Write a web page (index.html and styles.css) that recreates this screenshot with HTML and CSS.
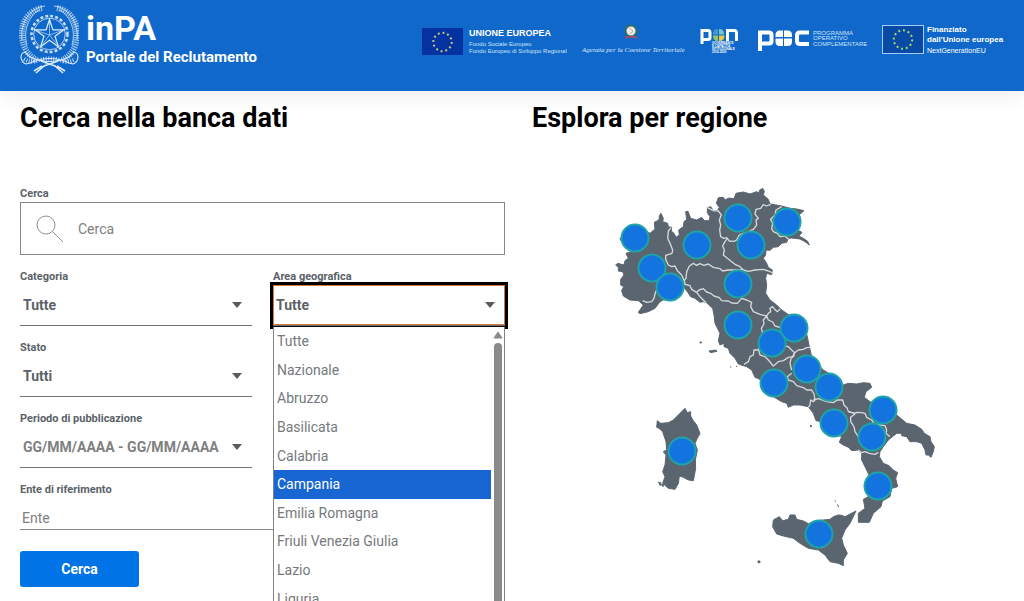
FILE: index.html
```html
<!DOCTYPE html>
<html lang="it">
<head>
<meta charset="utf-8">
<meta name="viewport" content="width=device-width, initial-scale=1">
<title>inPA - Portale del Reclutamento</title>
<link rel="stylesheet" href="styles.css">
</head>
<body>
<header class="header">
  <a class="brand" href="#">
    <svg class="emblem" width="60" height="70" viewBox="19 2 60 70" fill="none" stroke="#dcebfb" aria-hidden="true">
      <circle cx="49.500" cy="32" r="18" stroke-width="2.500" stroke-dasharray="3 2" opacity=".9"/>
      <circle cx="49.500" cy="32" r="15.800" stroke-width=".8"/>
      <path d="M49.500 17.500l3.400 10.300h11l-8.900 6.500 3.500 10.600-9-6.600-9 6.600 3.500-10.600-8.900-6.500h11z" stroke-width="1.200"/>
      <path d="M49.500 19v14M36.500 28.500l13 4.500M62 28.500L49.500 33M42 43l7.500-10M57.500 43l-8-10" stroke-width=".6"/>
      <path d="M42 6C25 9 18 27 24 44q4 10 13 14" stroke-width="6" stroke-dasharray="1.200 1.100" opacity=".7"/>
      <path d="M57 6c17 3 24 21 18 38q-4 10-13 14" stroke-width="6" stroke-dasharray="1.200 1.100" opacity=".7"/>
      <path d="M45 4C29 6 20 22 22 38M39 8C28 15 23 29 27 43M54 4c16 2 25 18 23 34M60 8c11 7 16 21 12 35" stroke-width=".8"/>
      <path d="M25 50q-4 1-4 5 0 5 5 7l4-1q20-9 39 0l4 1q5-2 5-7 0-4-4-5l-5 5q-19 9-39 0z" stroke-width="1.100"/>
      <path d="M24 57q7 4 12 2 14-5 27 0 6 2 12-2" stroke-width="4" stroke-dasharray="1 1.500" opacity=".85"/>
      <path d="M36 71l8-7 14-5M34 69l8-5M63 71l-8-7-14-5M65 69l-8-5" stroke-width="1.600"/>
    </svg>
    <span class="brand-text">
      <span class="brand-name">inPA</span>
      <span class="brand-tagline">Portale del Reclutamento</span>
    </span>
  </a>
  <div class="partners">
    <svg class="partner" width="145" height="42" viewBox="422 20 145 42">
      <rect x="422" y="28" width="41" height="27" fill="#0432a0"/>
      <circle class="stars" cx="442.500" cy="42" r="9.200" pathLength="120"/>
      <text class="p-title" x="469" y="36">UNIONE EUROPEA</text>
      <text class="p-small" x="469" y="46">Fondo Sociale Europeo</text>
      <text class="p-small" x="469" y="53">Fondo Europeo di Sviluppo Regionale</text>
    </svg>
    <svg class="partner" width="103" height="42" viewBox="582 20 103 42">
      <circle cx="631" cy="31" r="5.500" fill="#e9eee9" stroke="#326f60" stroke-width="2"/>
      <path d="M629 28l4 3-3 3" fill="none" stroke="#c7a7a0"/>
      <path d="M625 38q6-3 12 0" fill="none" stroke="#ad4d64" stroke-width="2"/>
      <text class="p-script" x="582" y="52">Agenzia per la Coesione Territoriale</text>
    </svg>
    <svg class="partner" width="43" height="42" viewBox="700 20 43 42">
      <g fill="none" stroke="#fff" stroke-width="3">
        <path d="M702 44V30.500h6q2 0 2 2v5q0 2-2 2h-6"/>
        <path d="M727.500 41V30.500h6.500q2.500 0 2.500 2.500v8"/>
      </g>
      <path d="M713 34q0-5 5-5v5.500h-5z" fill="#4099cf"/><path d="M719 29q5 0 5 5v.500h-5z" fill="#78c7c8"/>
      <path d="M713 35.500h5V41q-5 0-5-5.500z" fill="#93c66c"/><path d="M719 35.500h5.500q0 5.500-5.500 5.500z" fill="#eec83e"/>
      <g class="p-micro"><text x="712" y="44">GOVERNANCE</text><text x="712" y="47">E CAPACITÀ</text><text x="712" y="50">ISTITUZIONALE</text><text x="712" y="53">2014-2020</text></g>
    </svg>
    <svg class="partner" width="109" height="42" viewBox="758 20 109 42">
      <g fill="none" stroke="#fff" stroke-width="4">
        <path d="M760 51V32.500h9q2.500 0 2.500 2.500v6q0 2.500-2.500 2.500h-9"/>
        <path d="M809 32.500h-9q-3 0-3 3v5.500q0 3 3 3h9"/>
      </g>
      <path d="M775.500 37v-2q0-4.500 4.500-4.500h3V37zM784 37v-6.500h3.500q4.500 0 4.500 4.500v2zM775.500 38.500h7.500V46h-3q-4.500 0-4.500-4.500zM784 38.500h8v3q0 4.500-4.500 4.500H784z" fill="#fff"/>
      <g class="p-poc"><text x="813" y="35">PROGRAMMA</text><text x="813" y="40">OPERATIVO</text><text x="813" y="46">COMPLEMENTARE</text></g>
    </svg>
    <svg class="partner" width="125" height="42" viewBox="882 20 125 42">
      <rect x="882.500" y="25.500" width="41" height="28" fill="#084aa5" stroke="#a8cdf5"/>
      <circle class="stars stars-bright" cx="903" cy="39.500" r="9.200" pathLength="120"/>
      <text class="p-next" x="927" y="32">Finanziato</text>
      <text class="p-next" x="927" y="42">dall'Unione europea</text>
      <text class="p-next-light" x="927" y="53">NextGenerationEU</text>
    </svg>
  </div>
</header>

<main class="main">
  <section class="search">
    <h2 class="title">Cerca nella banca dati</h2>
    <form class="form">
      <div class="field">
        <label class="label" for="q">Cerca</label>
        <div class="searchbox">
          <svg width="28" height="28" viewBox="0 0 28 28" fill="none" stroke="#8d9195" aria-hidden="true"><circle cx="10" cy="10" r="9"/><path d="M16.500 16.500L27 27"/></svg>
          <input class="searchbox-input" id="q" type="text" placeholder="Cerca">
        </div>
      </div>
      <div class="row">
        <div class="field">
          <label class="label" for="cat">Categoria</label>
          <select class="select" id="cat"><option>Tutte</option></select>
        </div>
        <div class="field">
          <label class="label" for="area">Area geografica</label>
          <div class="combo">
            <select class="select select-open" id="area"><option>Tutte</option></select>
            <div class="menu">
              <ul class="menu-list">
                <li class="option">Tutte</li>
                <li class="option">Nazionale</li>
                <li class="option">Abruzzo</li>
                <li class="option">Basilicata</li>
                <li class="option">Calabria</li>
                <li class="option option-active">Campania</li>
                <li class="option">Emilia Romagna</li>
                <li class="option">Friuli Venezia Giulia</li>
                <li class="option">Lazio</li>
                <li class="option">Liguria</li>
              </ul>
              <div class="scrollbar">
                <svg width="10" height="8" viewBox="0 0 10 8" aria-hidden="true"><path d="M5 1l4 6H1z" fill="#8a8a8a" stroke="#8a8a8a" stroke-linejoin="round"/></svg>
                <div class="thumb"></div>
              </div>
            </div>
          </div>
        </div>
      </div>
      <div class="row">
        <div class="field">
          <label class="label" for="stato">Stato</label>
          <select class="select" id="stato"><option>Tutti</option></select>
        </div>
      </div>
      <div class="row">
        <div class="field">
          <label class="label" for="periodo">Periodo di pubblicazione</label>
          <select class="select select-date" id="periodo"><option>GG/MM/AAAA - GG/MM/AAAA</option></select>
        </div>
      </div>
      <div class="field">
        <label class="label" for="ente">Ente di riferimento</label>
        <input class="line-input" id="ente" type="text" placeholder="Ente">
      </div>
      <button class="submit" type="button">Cerca</button>
    </form>
  </section>

  <section class="explore">
    <h2 class="title">Esplora per regione</h2>
    <svg class="map" viewBox="532 170 472 410" role="img" aria-label="Mappa delle regioni italiane">
      <g transform="translate(600 170) scale(.33333)">
        <g class="land">
          <path d="M75 190L100 165 140 185 150 190 165 177 163 157 177 150 178 138 183 130 190 145 188 155 203 160 205 170 215 172 214 183 222 190 228 202 238 195 236 180 250 170 252 155 260 148 257 125 264 124 272 145 290 150 305 142 313 152 328 152 330 140 322 128 322 113 332 110 340 122 352 122 358 112 349 100 355 83 370 82 375 90 387 84 402 86 408 70 430 66 450 72 470 65 480 70 477 62 488 55 493 64 490 75 505 88 510 102 528 105 545 108 570 115 590 117 612 122 598 134 603 150 590 170 592 180 606 187 597 198 610 205 623 214 628 225 615 215 600 207 575 204 565 205 560 217 545 220 535 230 520 232 510 241 498 240 497 255 490 265 499 278 505 292 517 300 515 314 500 310 497 325 500 345 497 370 510 390 530 405 545 420 575 440 600 455 615 475 622 500 628 530 635 560 650 580 670 600 695 615 730 645 745 640 770 642 790 638 810 640 815 652 798 665 793 682 810 695 845 710 890 735 920 760 945 765 965 778 973 790 990 800 993 815 1003 830 1000 845 993 862 985 855 978 855 975 840 965 820 950 815 930 815 920 800 905 797 905 790 890 790 880 798 865 810 850 830 840 845 838 860 850 880 867 887 880 900 893 908 887 925 893 950 875 955 870 980 847 993 843 1010 820 1030 808 1057 775 1057 775 1030 795 1015 790 988 805 980 800 940 807 915 795 890 785 870 785 850 775 840 755 842 745 832 730 825 718 817 725 800 690 780 665 755 648 752 640 730 625 710 600 705 580 705 565 712 560 700 545 695 520 680 490 650 480 628 465 622 455 600 440 590 415 582 405 565 390 550 385 535 372 530 372 520 360 525 355 512 360 490 345 460 343 440 338 415 320 398 310 395 300 397 285 385 272 380 262 365 250 350 235 370 200 385 180 395 165 415 145 425 120 431 115 427 130 405 115 392 90 390 70 378 65 362 71 350 62 345 62 328 72 315 68 305 55 303 55 292 47 285 53 280 72 285 75 272 85 265 78 250 95 245 65 215 60 206z"/>
          <path d="M172 752L182 760 205 758 220 750 235 735 255 715 262 728 272 725 272 738 280 752 290 765 300 790 292 805 285 820 292 840 286 870 287 895 280 932 265 930 250 922 238 918 235 940 225 958 205 955 188 940 195 920 188 905 195 885 198 855 190 845 200 840 198 815 188 785 177 775 170 772z"/>
          <path d="M518 1070L520 1050 538 1040 548 1052 565 1048 570 1035 585 1035 590 1048 610 1053 625 1061 650 1052 690 1048 700 1040 715 1035 725 1036 735 1040 768 1023 750 1060 735 1080 725 1105 730 1125 742 1150 730 1170 730 1187 715 1180 690 1175 675 1155 655 1140 625 1135 600 1120 580 1105 550 1098 530 1092z"/>
          <path d="M327 543l20-3 4 4-20 4zM300 516l4 0 0 3-4 0zM176 936l6 2 2 8-5-1zM186 942l5 2-2 6zM474 1173l6 0 0 5-6 0zM632 766l4 2-4 3zM390 591l4 0M408 589l4 0M704 992l4 3M712 1003l4 8"/>
        </g>
        <g class="borders">
          <path d="M213 173L205 183 203 205 210 220 218 240 216 250 197 256 197 268 205 285 215 290 225 288 232 302 245 315 252 330 255 340"/>
          <path d="M252 332L258 325 260 305 268 288 280 280 290 286 300 281 312 286 325 282 340 292 360 296 368 303 385 300 400 300 430 300 445 304 465 300 490 298 505 303 517 308"/>
          <path d="M322 113L340 122 355 123 364 135 358 150 362 165 359 180 362 200 372 205 380 203 388 213 402 214 410 210 418 195 430 190 445 185 460 178 470 165 468 150 475 145 465 132 468 118 482 115 490 104 500 108 512 103"/>
          <path d="M382 205L375 215 368 228 373 240 370 255 382 265 395 275 405 283 420 290 430 300M545 110L528 120 525 135 512 148 518 160 515 175 520 185 532 190 540 200 555 198 565 207"/>
          <path d="M128 392L140 397 155 395 162 385 166 368 172 355M252 342L270 347 275 358 290 367 300 380 318 398M290 367L297 360 310 356 320 366 332 370 342 378 358 383 365 392 385 393 395 399 412 400 425 385 440 390 455 397 452 410 460 425 480 433 500 438 505 430 512 425 510 415 518 410 524 418 532 425 540 417"/>
          <path d="M500 438L490 450 492 462 484 475 488 490M500 438L505 450 518 456 525 468 540 472 550 480M475 535L480 555 495 560 505 570 520 588 535 575 550 572 565 562 578 560 584 548 575 540 565 530 555 528M475 540L462 540 460 555 450 560 445 575 432 583"/>
          <path d="M584 548L595 540 610 538 620 533 632 532M584 548L580 560 573 565 570 580 575 600M575 610L562 620 565 630 580 635 590 647 610 653 620 660 635 660 642 672 645 690 640 695 632 690 630 705 625 712M640 690L655 686 680 695 700 698 712 690 728 690 732 705 742 715 745 725 765 730"/>
          <path d="M745 725L765 730 770 727 785 728 795 730 800 742 815 750 822 760 840 765 855 767 860 780 858 790 870 800M765 732L752 742 752 755 762 770 765 785 775 800 778 812M775 840L785 848 795 845 808 850 825 853 835 847"/>
        </g>
      </g>
      <g class="pins">
        <circle cx="635" cy="238" r="13.500"/><circle cx="652" cy="268" r="13.500"/><circle cx="670" cy="287" r="13.500"/><circle cx="697" cy="245" r="13.500"/>
        <circle cx="738" cy="218" r="13.500"/><circle cx="787" cy="222" r="13.500"/><circle cx="751" cy="245" r="13.500"/><circle cx="738" cy="284" r="13.500"/>
        <circle cx="738" cy="325" r="13.500"/><circle cx="794" cy="328" r="13.500"/><circle cx="772" cy="343" r="13.500"/><circle cx="807" cy="369" r="13.500"/>
        <circle cx="829" cy="387" r="13.500"/><circle cx="774" cy="383" r="13.500"/><circle cx="834" cy="423" r="13.500"/><circle cx="883" cy="410" r="13.500"/>
        <circle cx="872" cy="437" r="13.500"/><circle cx="878" cy="486" r="13.500"/><circle cx="682" cy="451" r="13.500"/><circle cx="819" cy="534" r="13.500"/>
      </g>
    </svg>
  </section>
</main>
</body>
</html>
```
FILE: styles.css
```css
* { box-sizing: border-box; }

body {
  margin: 0;
  background: #fff;
  color: #5b6268;
  font-family: Roboto, "Open Sans", sans-serif;
  font-size: 14px;
}

/* Header */
.header {
  display: flex;
  justify-content: space-between;
  align-items: flex-start;
  padding: 4px 17px 17px 19px;
  background: #1069ca;
  box-shadow: 0 4px 20px rgba(0, 0, 0, .08);
}
.brand {
  display: flex;
  gap: 7px;
  color: #fff;
  text-decoration: none;
  font-weight: 700;
}
.brand-text { display: flex; flex-direction: column; padding-top: 5px; }
.brand-name { font-size: 34px; line-height: 38px; }
.brand-tagline { font-size: 15px; line-height: 20px; }
.partners { display: flex; gap: 15px; padding-top: 16px; }
.partner { display: block; fill: #fff; font-family: "Liberation Sans", Arial, sans-serif; }
.stars {
  fill: none;
  stroke: #c6c97a;
  stroke-width: 2;
  stroke-dasharray: 4 6;
}
.stars-bright { stroke: #a5e060; }
.p-title { font-size: 9px; font-weight: 700; }
.p-small { font-size: 6px; fill: #cfe2f7; }
.p-script { font-family: "Liberation Serif", serif; font-style: italic; font-size: 7px; fill: #dbe9fa; }
.p-micro { font-size: 3px; font-weight: 700; }
.p-poc { font-size: 6px; fill: #cfe2f7; }
.p-next { font-size: 8px; font-weight: 700; }
.p-next-light { font-size: 7px; }

/* Page */
.main { display: grid; grid-template-columns: 1fr 1fr; }
.search { padding: 9px 7px 14px 20px; }
.explore { padding: 9px 20px 14px; }
.title {
  margin: 0;
  color: #000;
  font-size: 27px;
  font-weight: 700;
  line-height: 36px;
}
.map { display: block; width: 100%; margin-top: 34px; }
.land { fill: #5a6570; stroke: #5a6570; stroke-width: 3; stroke-linejoin: round; }
.borders { fill: none; stroke: #d5d9dc; stroke-width: 4; stroke-linejoin: round; }
.pins { fill: #1373df; stroke: #1ea3a8; stroke-width: 2; }

/* Form */
.form { display: flex; flex-direction: column; gap: 14px; margin-top: 50px; }
.row { display: grid; grid-template-columns: 1fr 1fr; gap: 21px; }
.field { display: flex; flex-direction: column; min-width: 0; }
.label { font-size: 11px; font-weight: 700; line-height: 16px; }
.searchbox {
  display: flex;
  align-items: center;
  gap: 14px;
  height: 53px;
  padding: 0 15px;
  border: 1px solid #85898c;
}
.searchbox-input {
  flex: 1;
  min-width: 0;
  padding: 0;
  border: 0;
  outline: 0;
  background: none;
  font: inherit;
}
input::placeholder { color: #808080; opacity: 1; }
.select {
  appearance: none;
  width: 100%;
  height: 41px;
  padding: 0 3px;
  border: 0;
  border-bottom: 1px solid #6f7376;
  border-radius: 0;
  background: #fff url("data:image/svg+xml,%3Csvg xmlns='http://www.w3.org/2000/svg' viewBox='0 0 10 6'%3E%3Cpath d='M0 0h10L5 6z' fill='%23575c60'/%3E%3C/svg%3E") no-repeat right 10px center / 10px 6px;
  color: #5b6268;
  font: 700 14px Roboto, sans-serif;
}
.select-date { color: #808080; }
.combo { position: relative; }
.select-open { display: block; outline: 3px solid #000; box-shadow: inset 0 0 0 1px #d97830; }
.menu {
  position: absolute;
  top: 42px;
  left: 0;
  right: 0;
  display: flex;
  border: 1px solid #7e8387;
  border-top: 0;
  background: #fff;
}
.menu-list {
  flex: 1;
  display: grid;
  grid-template-rows: repeat(10, 1fr);
  height: 286px;
  margin: 0;
  padding: 0;
  list-style: none;
}
.option { display: flex; align-items: center; padding: 0 3px; color: #75797d; }
.option-active { background: #1766d1; color: #fff; }
.scrollbar { display: flex; flex-direction: column; align-items: center; gap: 4px; width: 13px; padding-top: 4px; }
.thumb { flex: 1; width: 8px; border-radius: 4px; background: #8a8a8a; }
.line-input {
  width: 100%;
  height: 32px;
  padding: 8px 2px 0;
  border: 0;
  border-bottom: 1px solid #85898c;
  background: none;
  font: inherit;
}
.submit {
  align-self: flex-start;
  width: 119px;
  height: 36px;
  margin-top: 7px;
  border: 0;
  border-radius: 3px;
  background: #0073e6;
  color: #fff;
  font: 700 14px Roboto, sans-serif;
}
```
